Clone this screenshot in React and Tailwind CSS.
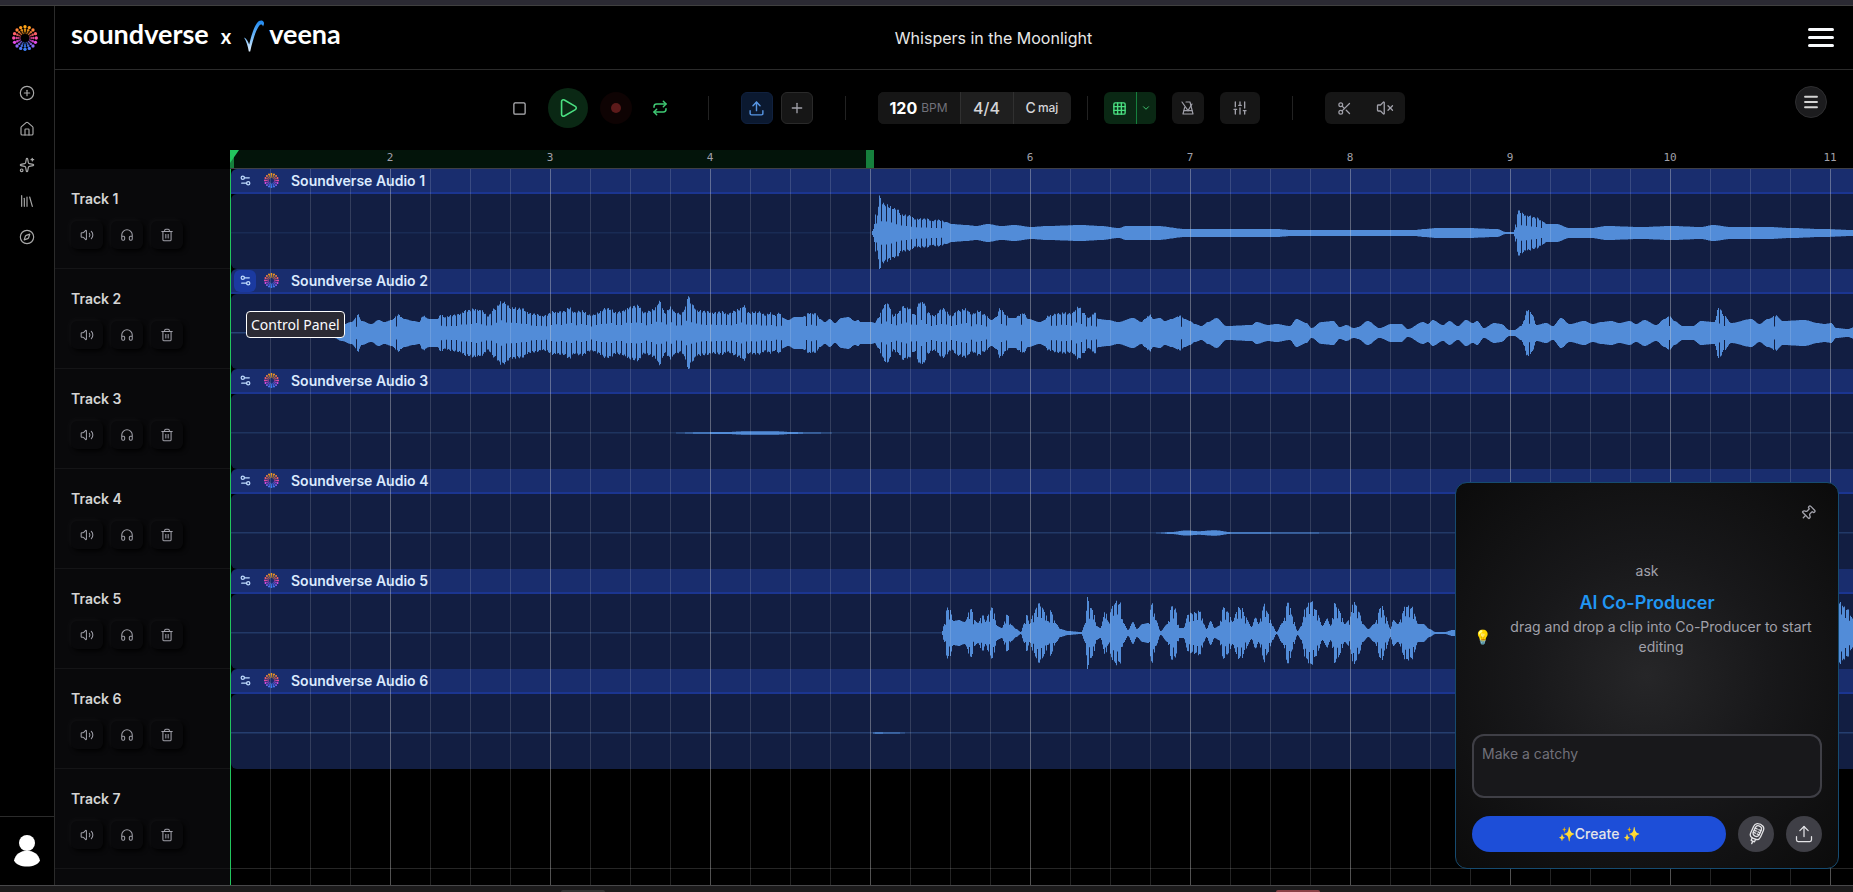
import React, { useState } from "react";
import {
  ChevronDown,
  CirclePlus,
  Compass,
  Grid3x3,
  Headphones,
  House,
  Library,
  Menu,
  Pin,
  Play,
  Plus,
  Repeat,
  Scissors,
  Settings2,
  SlidersVertical,
  Sparkles,
  Square,
  Trash2,
  Upload,
  Volume2,
  VolumeX,
} from "lucide-react";

const CLIP_HEIGHT = 75;
const WAVE_MIDDLE = 39;

// Envelope segments: start is in px on the timeline, rate is points per px,
// points are [position, amplitude, position, amplitude, ...]
const tracks = [
  {
    id: 1,
    line: 0.12,
    comb: { min: 11, step: 5, depth: 0.4 },
    segments: [
      {
        start: 640,
        rate: 1,
        points: [
          0, 0, 2, 4, 5, 23, 6, 18, 8, 36, 11, 29, 15, 28, 18, 26, 26, 23, 30, 18, 39, 17, 43, 14, 56, 14, 60, 12, 66, 13,
          75, 11, 80, 9, 95, 8, 105, 7, 116, 9, 130, 7, 143, 8, 160, 6, 175, 7, 210, 8, 230, 7, 247, 5, 255, 7, 285, 7,
          315, 4, 405, 4, 420, 3, 483, 3, 543, 3, 553, 4, 565, 5, 595, 5, 625, 4, 635, 1, 642, 1, 647, 22, 650, 20,
          653, 18, 657, 17, 665, 15, 671, 12, 675, 9, 685, 9, 698, 5, 720, 5, 735, 7, 770, 6, 800, 7, 830, 6, 841, 8,
          860, 6, 897, 6, 920, 5, 950, 4, 983, 3, 1000, 3,
        ],
      },
    ],
  },
  {
    id: 2,
    line: 0.35,
    comb: { min: 16, step: 5, depth: 0.4 },
    segments: [
      {
        start: 0,
        rate: 1,
        points: [
          60, 0, 70, 3, 95, 5, 103, 5, 110, 8, 120, 11, 127, 18, 130, 12, 140, 9, 147, 13, 153, 11, 160, 13, 167, 18,
          173, 14, 182, 12, 188, 11, 191, 17, 198, 14, 206, 14, 210, 19, 212, 16, 225, 18, 235, 22, 245, 24, 249, 22,
        ],
      },
      {
        start: 250,
        rate: 3,
        points: [
          0, 22, 20, 17, 40, 24, 60, 31, 90, 25, 120, 24, 150, 19, 190, 17, 215, 21, 245, 21, 265, 25, 280, 20, 300, 22,
          330, 17, 350, 20, 370, 24, 390, 24, 400, 20, 420, 21, 440, 25, 470, 27, 490, 20, 515, 23, 535, 31, 550, 20,
          570, 26, 580, 20, 600, 19, 610, 24, 620, 37, 630, 28, 650, 22, 680, 21, 700, 20, 720, 21, 740, 19, 770, 23,
          787, 27, 800, 20, 830, 21, 850, 18, 870, 20, 880, 17, 895, 20, 905, 15, 920, 13, 940, 16, 965, 16, 985, 20,
          1005, 19, 1015, 14, 1030, 11, 1045, 14, 1060, 10, 1080, 15, 1100, 16, 1120, 12, 1130, 13, 1137, 11,
        ],
      },
      {
        start: 630,
        rate: 3,
        points: [
          0, 11, 30, 11, 40, 10, 50, 15, 65, 25, 75, 30, 85, 26, 95, 17, 110, 20, 125, 26, 140, 25, 160, 18, 175, 31,
          185, 31, 200, 20, 215, 17, 245, 24, 270, 17, 290, 22, 315, 24, 330, 18, 350, 22, 370, 18, 390, 13, 405, 16,
          415, 24, 435, 18, 445, 15, 460, 15, 485, 20, 500, 14, 535, 11, 550, 13, 560, 17, 590, 19, 605, 20, 630, 19,
          650, 26, 670, 19, 680, 15, 700, 20, 710, 14, 740, 13, 770, 11, 815, 15, 840, 11, 850, 14, 865, 18, 875, 14,
          895, 15, 910, 12, 930, 14, 955, 17, 970, 14, 985, 12, 1000, 9, 1020, 7, 1040, 11, 1065, 15, 1095, 7, 1170, 8,
          1185, 11, 1220, 8, 1245, 9, 1285, 7, 1305, 14, 1335, 10, 1350, 5, 1380, 11, 1415, 12, 1435, 6, 1455, 8,
          1476, 5,
        ],
      },
      {
        start: 1123,
        rate: 3,
        points: [
          0, 5, 10, 6, 40, 12, 75, 5, 110, 9, 140, 9, 160, 4, 205, 11, 220, 9, 235, 13, 265, 8, 285, 12, 310, 7, 335, 13,
          355, 10, 368, 12, 388, 5, 420, 10, 440, 9, 465, 3, 480, 3, 500, 7, 510, 13, 517, 23, 527, 22, 535, 17, 545, 8,
          575, 10, 595, 7, 620, 15, 645, 9, 690, 12, 715, 9, 740, 11, 770, 12, 795, 10, 825, 12, 845, 9, 870, 13,
          905, 8, 930, 14, 945, 17, 960, 12, 985, 7, 1015, 7, 1040, 12, 1080, 11, 1093, 25, 1110, 17, 1130, 10,
          1190, 14, 1215, 9, 1240, 14, 1265, 17, 1285, 12, 1350, 13, 1390, 10, 1410, 9, 1430, 10, 1445, 5, 1480, 4,
          1500, 6,
        ],
      },
    ],
  },
  {
    id: 3,
    line: 0.2,
    segments: [{ start: 445, rate: 1, points: [0, 0.2, 25, 0.8, 50, 1, 70, 1.8, 98, 1.8, 115, 1, 130, 0.6, 155, 0.2] }],
  },
  {
    id: 4,
    line: 0.25,
    segments: [
      {
        start: 925,
        rate: 1,
        points: [0, 0.2, 15, 1, 30, 2.6, 42, 1.8, 58, 2.8, 75, 0.8, 100, 0.8, 130, 0.5, 195, 0.2],
      },
    ],
  },
  {
    id: 5,
    line: 0.25,
    comb: { min: 13, step: 4, depth: 0.6 },
    segments: [
      {
        start: 670,
        rate: 2.613,
        points: [
          105, 0, 112, 9, 120, 25, 128, 22, 135, 12, 150, 13, 165, 11, 182, 25, 190, 13, 200, 10, 212, 18, 220, 11,
          228, 19, 238, 26, 250, 7, 262, 5, 277, 19, 287, 8, 300, 4, 312, 1, 320, 9, 327, 19, 335, 9, 345, 19, 358, 29,
          375, 22, 383, 11, 390, 22, 405, 9, 415, 4, 435, 2, 470, 1, 480, 9, 487, 36, 492, 24, 500, 24, 510, 7, 520, 5,
          533, 23, 540, 11, 550, 26, 560, 31, 572, 29, 580, 10, 592, 3, 605, 11, 615, 4, 630, 9, 645, 10, 655, 31,
          665, 13, 677, 2, 695, 9, 705, 26, 715, 24, 727, 5, 737, 5, 750, 19, 765, 20, 782, 22, 790, 9, 797, 4, 808, 12,
          818, 5, 830, 7, 840, 25, 855, 20, 865, 11, 880, 25, 890, 24, 900, 15, 915, 6, 925, 16, 933, 9, 948, 28,
          960, 18, 970, 7, 980, 1, 995, 10, 1012, 32, 1020, 18, 1035, 2, 1045, 7, 1055, 25, 1070, 32, 1085, 22,
          1100, 7, 1112, 14, 1122, 7, 1132, 29, 1145, 22, 1158, 9, 1170, 13, 1182, 32, 1195, 22, 1205, 9, 1220, 4,
          1235, 9, 1255, 27, 1265, 16, 1278, 4, 1285, 13, 1297, 9, 1318, 27, 1335, 25, 1350, 9, 1363, 9, 1380, 4,
          1395, 1, 1420, 1, 1440, 3, 1480, 3, 1600, 20, 2440, 22, 2450, 31, 2470, 24, 2490, 12, 2510, 8,
        ],
      },
    ],
  },
  {
    id: 6,
    line: 0.3,
    segments: [{ start: 640, rate: 1, points: [0, 0, 4, 0.7, 20, 0.6, 40, 0] }],
  },
  { id: 7 },
];

const bars = [2, 3, 4, 5, 6, 7, 8, 9, 10, 11];

// One column per pixel, so the comb keeps square teeth
function wavePath({ start, rate, points }, comb) {
  let top = "";
  let bottom = "";
  let i = 0;
  const first = Math.ceil(points[0] / rate);
  const last = Math.floor(points[points.length - 2] / rate);
  for (let x = first; x <= last; x++) {
    const pos = x * rate;
    while (i < points.length - 4 && pos > points[i + 2]) i += 2;
    const t = Math.min(1, Math.max(0, (pos - points[i]) / (points[i + 2] - points[i])));
    const eased = t * t * (3 - 2 * t);
    let amp = points[i + 1] + (points[i + 3] - points[i + 1]) * eased;
    if (comb && amp > comb.min) {
      amp *= 1 + 0.05 * Math.sin(x * 1.7);
      if (x % comb.step === 0) amp *= comb.depth;
    }
    top += `V${(WAVE_MIDDLE - amp).toFixed(1)}H${start + x + 1}`;
    bottom = `H${start + x + 1}V${(WAVE_MIDDLE + amp).toFixed(1)}H${start + x}` + bottom;
  }
  return `M${start + first},${WAVE_MIDDLE}${top}${bottom}Z`;
}

function Waveform({ track }) {
  return (
    <svg className="block w-full" height={CLIP_HEIGHT} aria-hidden="true">
      <rect x="0" y={WAVE_MIDDLE - 1} width="100%" height="1.5" fill="#528cd8" opacity={track.line} />
      {track.segments.map((segment) => (
        <path key={segment.start} d={wavePath(segment, track.comb)} fill="#528cd8" />
      ))}
    </svg>
  );
}

const ringStops = [
  [255, 165, 20],
  [255, 90, 110],
  [240, 70, 230],
  [60, 130, 255],
];

// Orange on top, pink on the sides, blue at the bottom
function dotColor(y) {
  const t = ((y + 1) / 2) * 3;
  const i = Math.min(2, Math.floor(t));
  const mix = ringStops[i].map((c, k) => Math.round(c + (ringStops[i + 1][k] - c) * (t - i)));
  return `rgb(${mix.join(",")})`;
}

const rings = [
  { r: 46, dot: 6.8 },
  { r: 34, dot: 5 },
  { r: 26, dot: 3.8 },
  { r: 20, dot: 2.8 },
];

function DotLogo({ size }) {
  return (
    <svg width={size} height={size} viewBox="-53 -53 106 106" aria-hidden="true">
      {rings.map(({ r, dot }) =>
        Array.from({ length: 16 }, (_, i) => {
          const a = (i * Math.PI) / 8;
          return (
            <circle
              key={`${r}-${i}`}
              cx={r * Math.sin(a)}
              cy={-r * Math.cos(a)}
              r={dot}
              fill={dotColor(-Math.cos(a))}
              opacity={0.5 + r / 92}
            />
          );
        })
      )}
    </svg>
  );
}

function VeenaMark() {
  return (
    <svg width="22" height="32" viewBox="0 0 22 32" aria-hidden="true">
      <defs>
        <linearGradient id="veena" x1="0" y1="0" x2="0" y2="1">
          <stop offset="0" stopColor="#1e88f0" />
          <stop offset="0.5" stopColor="#6cb6f7" />
          <stop offset="1" stopColor="#e6f3ff" />
        </linearGradient>
      </defs>
      <path
        d="M1 17.5c2 .8 3.600 3 5.200 7C8.500 15 11 7 14 3c1.600-2.200 4-3 5.800-2 1.600 1 1.600 3.200.2 5.500-.6-2.300-2.600-2.600-4-.5C12.500 11 9.500 21 7.200 31.500H5.800C4.800 26 3.500 21.500 1 17.500z"
        fill="url(#veena)"
      />
    </svg>
  );
}

function MetronomeOff() {
  return (
    <svg width="16" height="16" viewBox="0 0 24 24" fill="none" stroke="currentColor" strokeWidth="1.75" strokeLinecap="round" strokeLinejoin="round" aria-hidden="true">
      <path d="M9 3h6l4.500 18h-15L7 11" />
      <path d="M6 16h12" />
      <path d="M3 3l9 13" />
      <path d="M12 16l6-10" />
    </svg>
  );
}

function StudioMic() {
  return (
    <svg width="22" height="22" viewBox="0 0 24 24" fill="none" stroke="currentColor" strokeWidth="1.4" strokeLinecap="round" strokeLinejoin="round" aria-hidden="true">
      <g transform="rotate(24 12 12)">
        <rect x="8.500" y="2.500" width="7" height="12" rx="3.500" />
        <path d="M8.500 6.500h2.500M13 6.500h2.500M8.500 9h2.500M13 9h2.500M8.500 11.500h2.500M13 11.500h2.500" />
        <path d="M8.500 1.200C7 2 6.200 3.500 6.200 5.500V13c0 3 2 4.500 4.300 4.500h3c2.300 0 4.300-1.500 4.300-4.500V5.500c0-2-.8-3.500-2.300-4.300-2-1-5-1-7 0z" />
        <path d="M10 17.500v3h4v-3M12 20.500V23.500" />
      </g>
    </svg>
  );
}

const navItems = [
  { label: "Create", icon: CirclePlus },
  { label: "Home", icon: House },
  { label: "Magic tools", icon: Sparkles },
  { label: "Library", icon: Library },
  { label: "Explore", icon: Compass },
];

function Sidebar() {
  return (
    <aside className="w-[55px] shrink-0 border-r border-[#2b2b2b] flex flex-col">
      <a href="#home" aria-label="Soundverse" className="mt-[19px] ml-3 w-[26px]">
        <DotLogo size={26} />
      </a>
      <nav className="mt-[34px] flex flex-col items-center gap-5">
        {navItems.map(({ label, icon: Icon }) => (
          <a key={label} href="#nav" aria-label={label} className="text-[#a8a8a8] hover:text-white">
            <Icon size={16} strokeWidth={1.75} />
          </a>
        ))}
      </nav>
      <button aria-label="Account" className="mt-auto h-[69px] border-t border-[#2b2b2b] flex items-center justify-center">
        <svg width="26" height="32" viewBox="0 0 26 32" fill="white" aria-hidden="true">
          <circle cx="13" cy="8" r="8" />
          <path d="M0 25.500C1.500 19 6.500 15.700 13 15.700S24.500 19 26 25.500C24 29.500 19 31.500 13 31.500S2 29.500 0 25.500z" />
        </svg>
      </button>
    </aside>
  );
}

function Header() {
  return (
    <header className="h-16 border-b border-[#2b2b2b] flex items-center px-4 pr-[17px]">
      <div className="flex-1 pb-1 flex items-center font-['Lato',sans-serif] text-white">
        <span className="pb-1 text-[27px] leading-8 font-bold">soundverse</span>
        <span className="ml-3 text-xl leading-6 font-bold">x</span>
        <span className="ml-3">
          <VeenaMark />
        </span>
        <span className="ml-1 pb-1 text-[27px] leading-8 font-bold">veena</span>
      </div>
      <h1 className="pl-20 text-base text-[#e8e8e8]">Whispers in the Moonlight</h1>
      <div className="flex-1 flex justify-end">
        <button aria-label="Menu" className="w-[30px] px-0.5 flex flex-col gap-[5px]">
          <span className="h-[3px] rounded-full bg-slate-50" />
          <span className="h-[3px] rounded-full bg-slate-50" />
          <span className="h-[3px] rounded-full bg-slate-50" />
        </button>
      </div>
    </header>
  );
}

function Divider() {
  return <span className="w-px h-6 bg-[#222222]" />;
}

function Toolbar() {
  return (
    <div className="relative h-20 pb-1 flex items-center justify-center">
      <div className="flex items-center gap-8">
        <div className="flex items-center gap-3">
          <button aria-label="Stop" className="size-8 flex items-center justify-center text-[#b4b4b8]">
            <Square size={15} strokeWidth={2} />
          </button>
          <button aria-label="Play" className="size-10 rounded-full bg-[#0a2814] flex items-center justify-center text-[#4ade80]">
            <Play size={22} strokeWidth={1.75} />
          </button>
          <button aria-label="Record" className="size-8 rounded-full bg-[#0e0303] flex items-center justify-center">
            <span className="size-2.5 rounded-full bg-[#5c1a1a]" />
          </button>
          <button aria-label="Loop" className="size-8 flex items-center justify-center text-[#3fca74]">
            <Repeat size={16} strokeWidth={2.25} />
          </button>
        </div>
        <Divider />
        <div className="flex gap-2">
          <button aria-label="Import audio" className="size-8 rounded-md border border-[#10213f] bg-[#0b1930] flex items-center justify-center text-[#5795e3]">
            <Upload size={17} strokeWidth={2} />
          </button>
          <button aria-label="Add track" className="size-8 rounded-md border border-[#2a2a2a] bg-[#161616] flex items-center justify-center text-[#a1a1aa]">
            <Plus size={16} strokeWidth={2} />
          </button>
        </div>
        <Divider />
        <div className="flex items-center gap-4">
          <div className="flex h-8 rounded-md overflow-hidden bg-[#1f1f1f] text-[#d4d4d8]">
            <button className="w-[82px] bg-[#161616] flex items-center justify-center gap-1">
              <span className="text-base font-bold text-white">120</span>
              <span className="text-xs text-[#71717a]">BPM</span>
            </button>
            <button className="w-[53px] border-l border-[#303030] text-base font-medium">4/4</button>
            <button className="w-[58px] border-l border-[#303030] flex items-center justify-center gap-0.5">
              <span className="text-sm font-medium">C</span>
              <span className="text-xs font-medium">maj</span>
            </button>
          </div>
          <Divider />
          <div className="flex h-8 rounded-md overflow-hidden bg-[#0a2814] text-[#4ade80]">
            <button aria-label="Snap to grid" className="w-8 flex items-center justify-center">
              <Grid3x3 size={15} strokeWidth={2.25} />
            </button>
            <button aria-label="Grid options" className="w-5 border-l border-[#15803d] flex items-center justify-center">
              <ChevronDown size={10} strokeWidth={2} />
            </button>
          </div>
          <button aria-label="Metronome" className="size-8 rounded-md bg-[#161616] flex items-center justify-center text-[#a1a1aa]">
            <MetronomeOff />
          </button>
          <button aria-label="Mixer" className="w-10 h-8 rounded-md bg-[#161616] flex items-center justify-center text-[#a1a1aa]">
            <SlidersVertical size={16} strokeWidth={2} />
          </button>
        </div>
        <Divider />
        <div className="flex h-8 rounded-md bg-[#161616] text-[#a1a1aa]">
          <button aria-label="Split clip" className="w-10 flex items-center justify-center">
            <Scissors size={15} strokeWidth={2} />
          </button>
          <button aria-label="Mute clip" className="w-10 flex items-center justify-center">
            <VolumeX size={18} strokeWidth={1.75} />
          </button>
        </div>
      </div>
      <button aria-label="Project menu" className="absolute top-4 right-[26px] size-8 rounded-full border border-[#2e2e30] bg-[#1c1c1e] flex items-center justify-center text-[#d4d4d4]">
        <Menu size={18} strokeWidth={2.5} />
      </button>
    </div>
  );
}

function Ruler() {
  return (
    <div className="ml-[175px] h-[19px] border-b border-[#3f3f46] relative overflow-hidden font-['DejaVu_Sans_Mono',monospace]">
      <div className="h-full w-[640px] bg-[#03140a] flex justify-between">
        <span className="w-1 h-full bg-[#16803d]" />
        <span className="w-1 h-full bg-[#16803d]" />
      </div>
      <svg className="absolute left-0 top-0" width="9" height="13" aria-hidden="true">
        <path d="M0 0h9L0 13z" fill="#22c55e" />
      </svg>
      <div className="absolute inset-0 left-20 flex">
        {bars.map((bar) => (
          <span key={bar} className="w-40 shrink-0 text-center text-[11px] leading-[15px] text-[#a1a1aa]">
            {bar === 5 ? <span className="mx-auto block w-2 h-[18px] bg-[#16803d]" /> : bar}
          </span>
        ))}
      </div>
    </div>
  );
}

const trackActions = [
  { label: "Mute", icon: Volume2 },
  { label: "Solo", icon: Headphones },
  { label: "Delete", icon: Trash2 },
];

function TrackHead({ track }) {
  return (
    <div className="w-[175px] shrink-0 h-full pt-5 pl-4 bg-[#09090b] border-b border-[#151517]">
      <p className="text-sm font-semibold text-[#d4d4d4]">Track {track.id}</p>
      <div className="mt-3 flex gap-2">
        {trackActions.map(({ label, icon: Icon }) => (
          <button
            key={label}
            aria-label={`${label} track ${track.id}`}
            className="w-8 h-7 rounded-md bg-[#09090b] flex items-center justify-center text-[#a1a1aa] shadow-[-2px_-2px_4px_rgba(255,255,255,0.035),2px_2px_4px_rgba(0,0,0,0.9)]"
          >
            <Icon size={14} strokeWidth={1.75} />
          </button>
        ))}
      </div>
    </div>
  );
}

function Clip({ track, active, onSelect }) {
  return (
    <div className="flex-1 min-w-0 h-full ml-px overflow-hidden">
      <div className="h-[25px] rounded-tl-md bg-[#192d6e] border-b-2 border-[#1b3590] flex items-center">
        <button
          aria-label="Control Panel"
          onClick={onSelect}
          className={
            active
              ? "ml-[3px] size-[22px] rounded-md bg-[#1b3aa0] flex items-center justify-center text-[#bfdbfe]"
              : "ml-[3px] size-[22px] flex items-center justify-center text-[#bfdbfe]"
          }
        >
          <Settings2 size={13} strokeWidth={2.25} />
        </button>
        <span className="ml-2">
          <DotLogo size={15} />
        </span>
        <span className="ml-3 text-sm font-semibold text-[#dbeafe]">Soundverse Audio {track.id}</span>
      </div>
      <div className="rounded-l-md bg-[#121e42]">
        <Waveform track={track} />
      </div>
    </div>
  );
}

function Timeline() {
  const [active, setActive] = useState(2);

  return (
    <div className="relative flex-1 min-h-0 overflow-hidden">
      {tracks.map((track) => (
        <div key={track.id} className="h-[100px] flex">
          <TrackHead track={track} />
          {track.segments ? (
            <Clip track={track} active={track.id === active} onSelect={() => setActive(track.id)} />
          ) : (
            <div className="flex-1 border-b border-[#262626]" />
          )}
        </div>
      ))}
      <div className="w-[175px] h-[100px] bg-[#09090b]" />

      {/* Beat and bar lines run over the clips */}
      <div className="pointer-events-none absolute inset-y-0 left-[175px] right-0 bg-[repeating-linear-gradient(to_right,rgba(255,255,255,0.14)_0px,rgba(255,255,255,0.14)_1px,transparent_1px,transparent_40px)]" />
      <div className="pointer-events-none absolute inset-y-0 left-[175px] right-0 bg-[repeating-linear-gradient(to_right,rgba(200,200,200,0.28)_0px,rgba(200,200,200,0.28)_1px,transparent_1px,transparent_160px)]" />
      <div className="pointer-events-none absolute inset-y-0 left-[175px] w-px bg-[#22c55e]" />

      <div role="tooltip" className="absolute left-[191px] top-[142px] h-[27px] px-1 rounded-sm border border-white bg-[#2b2a33] flex items-center font-['Noto_Sans',sans-serif] text-sm text-[#fbfbfe]">
        Control Panel
      </div>
    </div>
  );
}

function CoProducer() {
  return (
    <section className="absolute right-3.5 bottom-[23px] w-96 h-[387px] p-4 pt-[18px] rounded-xl border border-[#164b70] bg-[radial-gradient(circle_at_center,#262628_0%,#18181a_45%,#0b0b0b_100%)] flex flex-col">
      <button aria-label="Pin" className="self-end w-7 h-6 flex items-center justify-center text-[#a1a1aa]">
        <Pin size={16} strokeWidth={2} className="rotate-45" />
      </button>
      <div className="mt-9 text-center text-sm text-[#a1a1aa]">
        <p>ask</p>
        <h2 className="mt-2 text-lg leading-7 font-semibold text-[#2196f3]">AI Co-Producer</h2>
        <div className="flex items-center">
          <span className="w-5 shrink-0 text-sm">💡</span>
          <p className="flex-1 pl-2">drag and drop a clip into Co-Producer to start editing</p>
        </div>
      </div>
      <textarea
        aria-label="Prompt"
        placeholder="Make a catchy"
        className="mt-auto h-16 w-full resize-none rounded-xl border-2 border-[#3f3f46] bg-[#18181b] px-2 py-2 text-sm text-white placeholder:text-[#71717a] outline-none"
      />
      <div className="mt-[18px] flex gap-3">
        <button className="flex-1 h-9 rounded-full bg-[#1d4ed8] text-sm font-medium text-[#e4e4e7]">✨Create ✨</button>
        <button aria-label="Record prompt" className="size-9 rounded-full bg-[#3f3f46] flex items-center justify-center text-[#e4e4e7]">
          <StudioMic />
        </button>
        <button aria-label="Upload" className="size-9 rounded-full bg-[#3f3f46] flex items-center justify-center text-[#e4e4e7]">
          <Upload size={20} strokeWidth={1.5} />
        </button>
      </div>
    </section>
  );
}

export default function App() {
  return (
    <div className="relative h-screen bg-black flex flex-col overflow-hidden font-['Inter',sans-serif]">
      <div className="h-1.5 shrink-0 bg-[#2b2a33] border-b border-[#404040]" />
      <div className="flex-1 min-h-0 flex">
        <Sidebar />
        <main className="flex-1 min-w-0 flex flex-col">
          <Header />
          <Toolbar />
          <Ruler />
          <Timeline />
        </main>
      </div>
      <div className="h-[7px] shrink-0 bg-[#1c1b1c] border-t border-[#48484a] flex items-end">
        <span className="ml-[30.3%] w-11 h-0.5 rounded-t-sm bg-[#333333]" />
        <span className="ml-[36.200%] w-11 h-0.5 rounded-t-sm bg-[#8a4046]" />
      </div>
      <CoProducer />
    </div>
  );
}
